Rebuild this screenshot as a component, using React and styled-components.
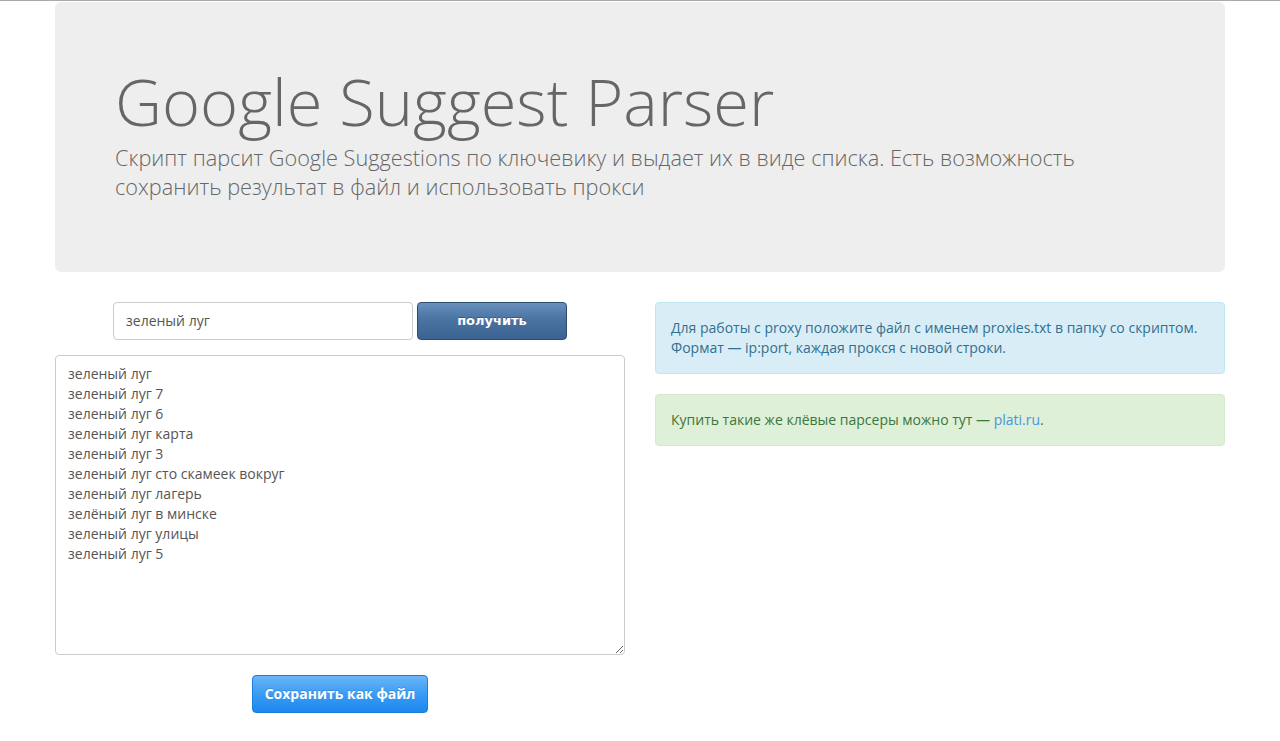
import React, { useState } from "react";
import styled, { createGlobalStyle } from "styled-components";

const GlobalStyle = createGlobalStyle`
  html, body {
    margin: 0;
    padding: 0;
    background: #fff;
  }
  body {
    border-top: 1px solid #aaa;
    font-family: "Open Sans", "Liberation Sans", sans-serif;
    font-size: 14px;
    line-height: 1.42857;
    color: #333;
  }
  * {
    box-sizing: border-box;
  }
`;

const Container = styled.div`
  width: 1170px;
  margin: 0 auto;
  padding-top: 1px;
`;

const Jumbotron = styled.div`
  background: #eee;
  border-radius: 6px;
  padding: 48px 60px 56px;
  margin-bottom: 30px;
  color: #666;
`;

const Title = styled.h1`
  margin: 16px 0 5px;
  font-size: 65px;
  font-weight: 300;
  line-height: 1.1;
  color: #666;
`;

const Lead = styled.p`
  max-width: 1010px;
  margin: 0 0 15px;
  font-size: 21.7px;
  font-weight: 300;
  line-height: 29px;
  color: #666;
`;

const Row = styled.div`
  display: grid;
  grid-template-columns: 570px 570px;
  column-gap: 30px;
  align-items: start;
`;

const Column = styled.div`
  display: flex;
  flex-direction: column;
`;

const SearchBar = styled.form`
  display: flex;
  justify-content: center;
  gap: 4px;
  margin-bottom: 15px;
`;

const Input = styled.input`
  width: 300px;
  height: 38px;
  padding: 6px 12px;
  border: 1px solid #ccc;
  border-radius: 4px;
  font-family: "Open Sans", "Liberation Sans", sans-serif;
  font-size: 14px;
  color: #555;
  outline: none;
`;

const GetButton = styled.button`
  width: 150px;
  height: 38px;
  border: 1px solid #2c4c72;
  border-radius: 4px;
  background: linear-gradient(to bottom, #6990bd 0%, #4a73a3 45%, #3b6391 100%);
  color: #fff;
  font-family: "DejaVu Sans", Verdana, sans-serif;
  font-weight: bold;
  font-size: 13px;
  text-shadow: 0 -1px 0 rgba(0, 0, 0, 0.25);
  cursor: pointer;
`;

const Output = styled.textarea`
  width: 570px;
  height: 300px;
  padding: 8px 12px;
  border: 1px solid #ccc;
  border-radius: 4px;
  font-family: "Open Sans", "Liberation Sans", sans-serif;
  font-size: 14px;
  line-height: 20px;
  color: #555;
  resize: both;
  outline: none;
`;

const SaveRow = styled.div`
  display: flex;
  justify-content: center;
  margin-top: 20px;
`;

const SaveButton = styled.button`
  height: 38px;
  padding: 0 12px;
  border: 1px solid #1a7fd9;
  border-radius: 4px;
  background: linear-gradient(to bottom, #6ab5f8 0%, #3a9cf4 50%, #1b88ef 100%);
  color: #fff;
  font-family: "Open Sans", "Liberation Sans", sans-serif;
  font-weight: bold;
  font-size: 14px;
  text-shadow: 0 -1px 0 rgba(0, 0, 0, 0.15);
  cursor: pointer;
`;

const Alert = styled.div`
  padding: 15px;
  margin-bottom: 20px;
  border: 1px solid ${(p) => (p.$kind === "success" ? "#d6e9c6" : "#bce8f1")};
  border-radius: 4px;
  background: ${(p) => (p.$kind === "success" ? "#dff0d8" : "#d9edf7")};
  color: ${(p) => (p.$kind === "success" ? "#3c763d" : "#31708f")};
  font-size: 14px;
  line-height: 20px;
`;

const Link = styled.a`
  color: #4a94dc;
  text-decoration: none;
`;

const suggestions = [
  "зеленый луг",
  "зеленый луг 7",
  "зеленый луг 6",
  "зеленый луг карта",
  "зеленый луг 3",
  "зеленый луг сто скамеек вокруг",
  "зеленый луг лагерь",
  "зелёный луг в минске",
  "зеленый луг улицы",
  "зеленый луг 5",
];

export default function App() {
  const [query, setQuery] = useState("зеленый луг");
  const [result, setResult] = useState(suggestions.join("\n"));

  return (
    <Container>
      <GlobalStyle />
      <Jumbotron>
        <Title>Google Suggest Parser</Title>
        <Lead>
          Скрипт парсит Google Suggestions по ключевику и выдает их в виде списка. Есть
          возможность сохранить результат в файл и использовать прокси
        </Lead>
      </Jumbotron>
      <Row>
        <Column>
          <SearchBar onSubmit={(e) => e.preventDefault()}>
            <Input value={query} onChange={(e) => setQuery(e.target.value)} />
            <GetButton type="submit">получить</GetButton>
          </SearchBar>
          <Output value={result} onChange={(e) => setResult(e.target.value)} />
          <SaveRow>
            <SaveButton type="button">Сохранить как файл</SaveButton>
          </SaveRow>
        </Column>
        <Column>
          <Alert>
            Для работы с proxy положите файл с именем proxies.txt в папку со скриптом.
            Формат — ip:port, каждая прокся с новой строки.
          </Alert>
          <Alert $kind="success">
            Купить такие же клёвые парсеры можно тут — <Link href="#">plati.ru</Link>.
          </Alert>
        </Column>
      </Row>
    </Container>
  );
}
